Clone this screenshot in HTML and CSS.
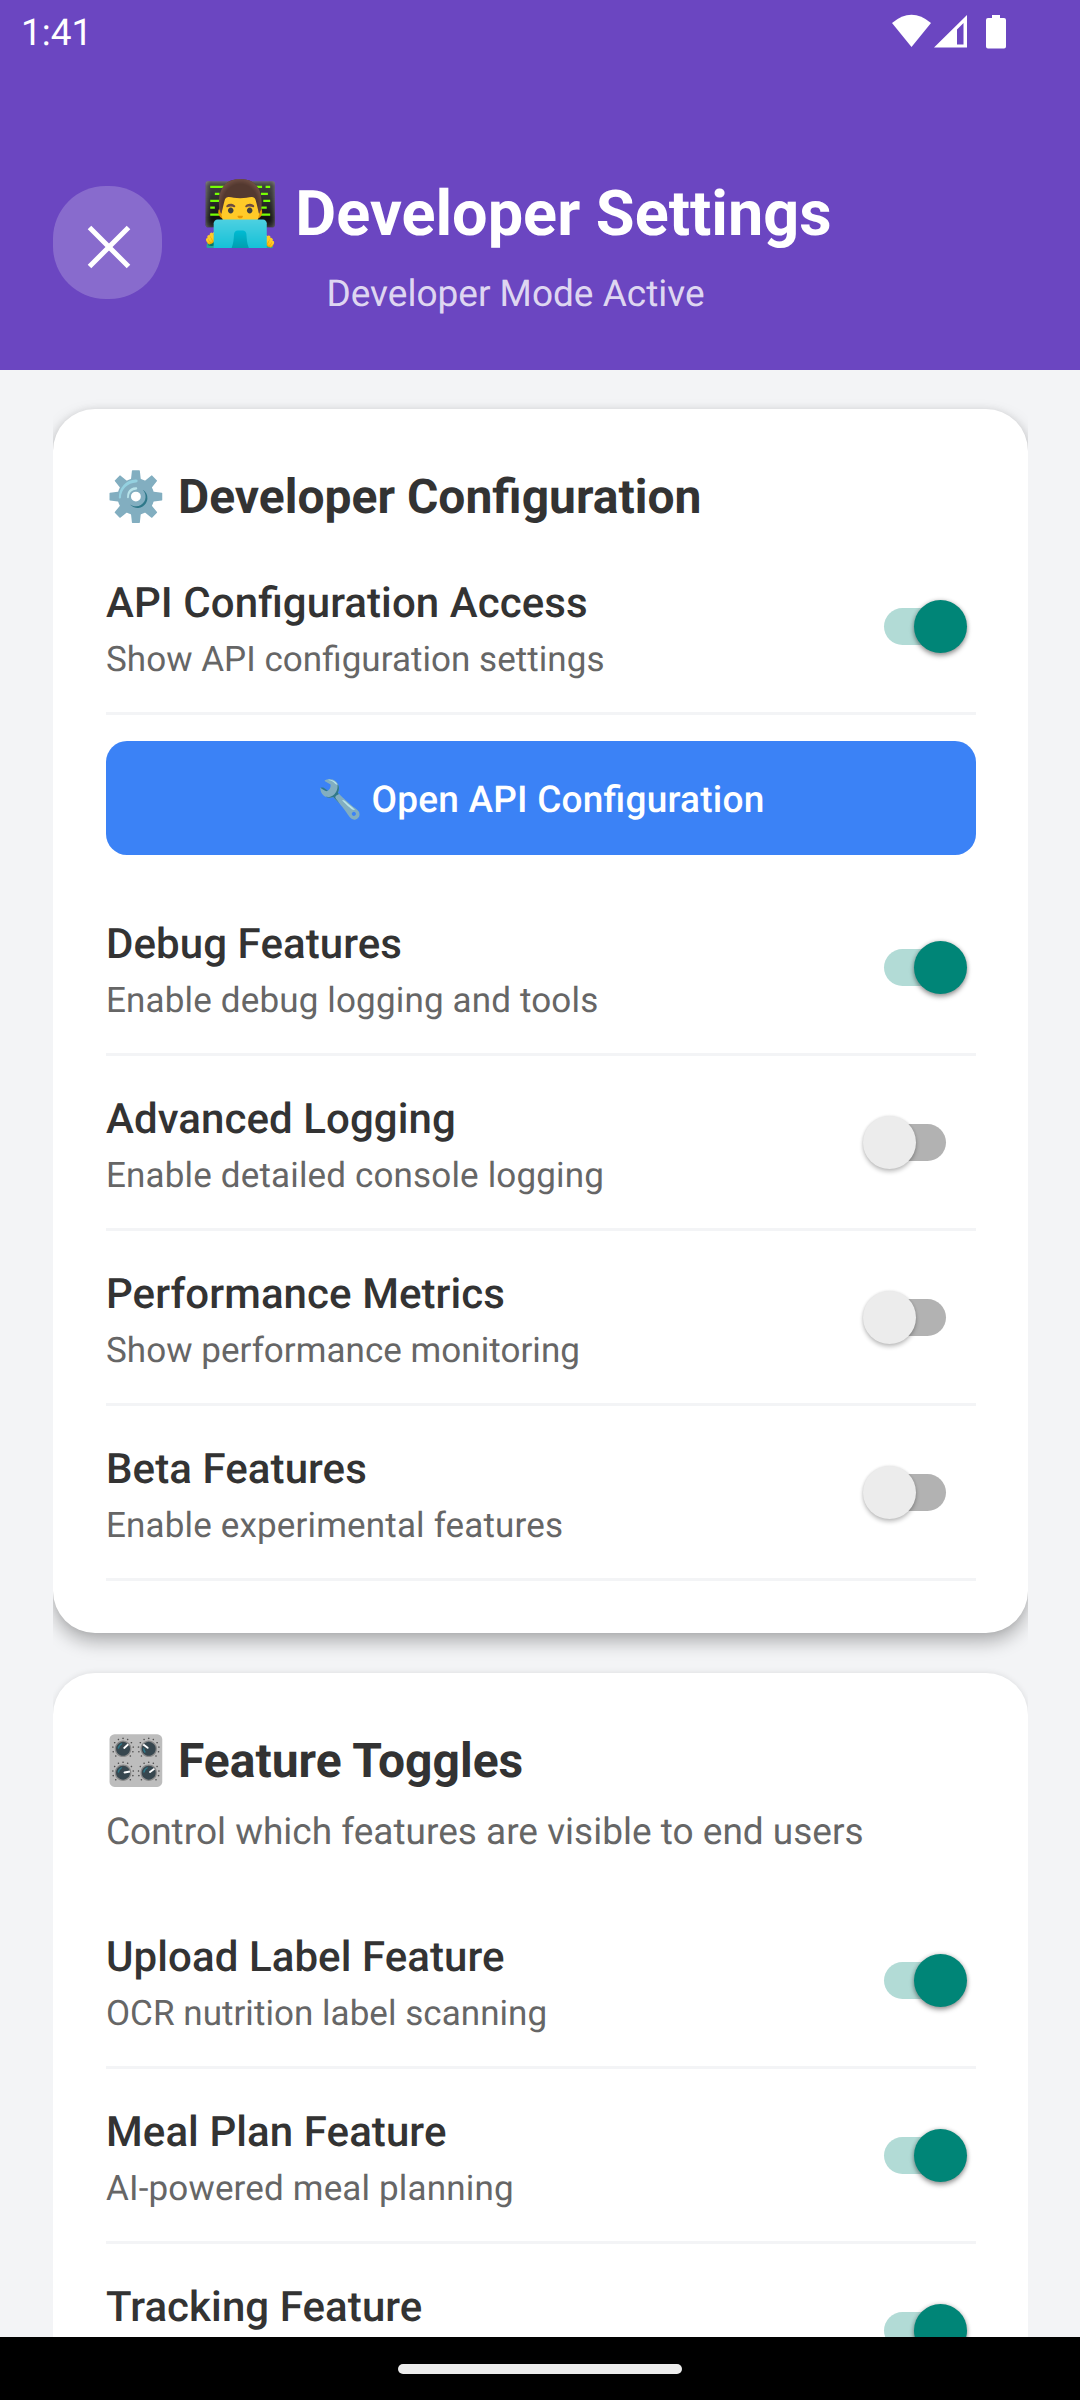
FILE: index.html
```html
<!DOCTYPE html>
<html lang="en">
<head>
<meta charset="utf-8">
<title>Developer Settings</title>
<link rel="stylesheet" href="styles.css">
</head>
<body>
<div class="screen">
  <header class="header">
    <div class="status">
      <span class="clock">1:41</span>
      <svg class="status-icons" width="116" height="36" viewBox="0 0 116 36" fill="#fff">
        <path d="M1 9Q20.500 -7.500 40 9L20.500 33Z"/>
        <path fill-rule="evenodd" d="M43 33.500L76 1V33.500ZM66 15.500V30.500H72.500V9Z"/>
        <path d="M101 1h8v3h4q2 0 2 2V32.500q0 2-2 2H97q-2 0-2-2V6Q95 4 97 4h4z"/>
      </svg>
    </div>
    <div class="header-row">
      <button class="close" aria-label="Close">
        <svg width="44" height="44" viewBox="0 0 44 44"><path d="M2.500 2.500L41.500 41.500M41.500 2.500L2.500 41.500" stroke="#fff" stroke-width="5"/></svg>
      </button>
      <div class="titles">
        <h1 class="title"><span class="emoji">👨‍💻</span><span>Developer Settings</span></h1>
        <p class="subtitle">Developer Mode Active</p>
      </div>
    </div>
  </header>
  <main class="content">
    <section class="card">
      <h2 class="heading"><span class="emoji">⚙️</span><span>Developer Configuration</span></h2>
      <div class="row first"><div><h3>API Configuration Access</h3><p class="tight">Show API configuration settings</p></div><span class="switch on"></span></div>
      <button class="action"><span class="emoji">🔧</span><span>Open API Configuration</span></button>
      <div class="row"><div><h3>Debug Features</h3><p>Enable debug logging and tools</p></div><span class="switch on"></span></div>
      <div class="row"><div><h3>Advanced Logging</h3><p>Enable detailed console logging</p></div><span class="switch"></span></div>
      <div class="row"><div><h3>Performance Metrics</h3><p class="tight">Show performance monitoring</p></div><span class="switch"></span></div>
      <div class="row"><div><h3>Beta Features</h3><p>Enable experimental features</p></div><span class="switch"></span></div>
    </section>
    <section class="card">
      <h2 class="heading"><span class="emoji">🎛️</span><span>Feature Toggles</span></h2>
      <p class="note">Control which features are visible to end users</p>
      <div class="row"><div><h3>Upload Label Feature</h3><p class="tight">OCR nutrition label scanning</p></div><span class="switch on"></span></div>
      <div class="row"><div><h3>Meal Plan Feature</h3><p>AI-powered meal planning</p></div><span class="switch on"></span></div>
      <div class="row"><div><h3>Tracking Feature</h3></div><span class="switch on"></span></div>
    </section>
  </main>
  <footer class="navbar"><span class="pill"></span></footer>
</div>
</body>
</html>
```

FILE: styles.css
```css
* { box-sizing: border-box; margin: 0; padding: 0; }
body { font-family: Roboto, "Noto Color Emoji", sans-serif; font-feature-settings: "liga" 1; color: #333; background: #f3f4f6; text-rendering: geometricPrecision; }
button { font: inherit; font-feature-settings: inherit; border: 0; text-rendering: inherit; }
.screen { width: 1080px; height: 2400px; display: flex; flex-direction: column; overflow: hidden; }

.header { height: 370px; flex: none; background: #6b46c1; color: #fff; }
.status { height: 66px; display: flex; justify-content: space-between; padding: 12px 73px 0 21px; }
.clock { font-size: 37px; line-height: 43px; }
.status-icons { margin-top: 2px; }
.header-row { display: flex; padding: 107px 53px 0; }
.close { width: 109px; height: 113px; margin-top: 13px; border-radius: 52.500px; background: rgba(255,255,255,.2); display: flex; align-items: center; justify-content: center; padding: 9px 0 0 2px; }
.titles { width: 709px; display: flex; flex-direction: column; align-items: center; }
.title { display: flex; font-size: 63px; line-height: 74px; font-weight: 700; margin-top: 5px; white-space: nowrap; }
.title .emoji { width: 94px; }
.subtitle { font-size: 37px; line-height: 43px; margin: 21px 2px 0 0; color: rgba(255,255,255,.8); }

.content { flex: 1; min-height: 0; margin: 0 52px 0 53px; padding-top: 39px; overflow: hidden; display: flex; flex-direction: column; gap: 40px; }
.card { flex: none; padding: 53px 52px 52px 53px; border-radius: 42px; background: #fff; box-shadow: 0 9px 18px rgba(0,0,0,.28), 0 0 7px rgba(0,0,0,.08); }
.card + .card { box-shadow: 0 0 6px rgba(0,0,0,.1); }
.heading { display: flex; font-size: 48px; line-height: 56px; font-weight: 700; margin-top: 7px; white-space: nowrap; }
.heading .emoji { width: 72px; }
.note { font-size: 37px; line-height: 43px; color: #666; margin: 22px 0 40px; }
.row { height: 175px; display: flex; justify-content: space-between; padding-top: 39px; border-bottom: 3px solid #f3f4f6; }
.row.first { margin-top: 15px; }
.row h3 { font-size: 42px; line-height: 49px; font-weight: 500; letter-spacing: .08px; }
.row p { font-size: 35px; line-height: 40px; letter-spacing: .16px; color: #666; margin-top: 12px; }
.row p.tight { letter-spacing: .04px; }
.switch { position: relative; width: 62px; height: 37px; border-radius: 19px; background: #b2b2b2; margin: 29px 30px 0 0; }
.switch::after { content: ""; position: absolute; left: -21px; top: -8px; width: 53px; height: 53px; border-radius: 50%; background: #ececec; box-shadow: 0 3px 4px rgba(0,0,0,.22), 0 0 3px rgba(0,0,0,.12); }
.switch.on { background: #b2dbd6; }
.switch.on::after { left: 30px; background: #008577; box-shadow: 0 3px 5px rgba(0,0,0,.35), 0 0 4px rgba(0,0,0,.2); }
.action { width: 100%; height: 114px; margin: 26px 0; border-radius: 21px; background: #3b82f6; color: #fff; font-size: 37px; font-weight: 500; letter-spacing: .22px; display: flex; align-items: center; justify-content: center; padding-top: 5px; }
.action .emoji { width: 54px; text-align: left; }

.navbar { height: 63px; flex: none; background: #000; display: flex; align-items: center; justify-content: center; }
.pill { width: 284px; height: 10px; border-radius: 5px; background: #ececec; }
```
